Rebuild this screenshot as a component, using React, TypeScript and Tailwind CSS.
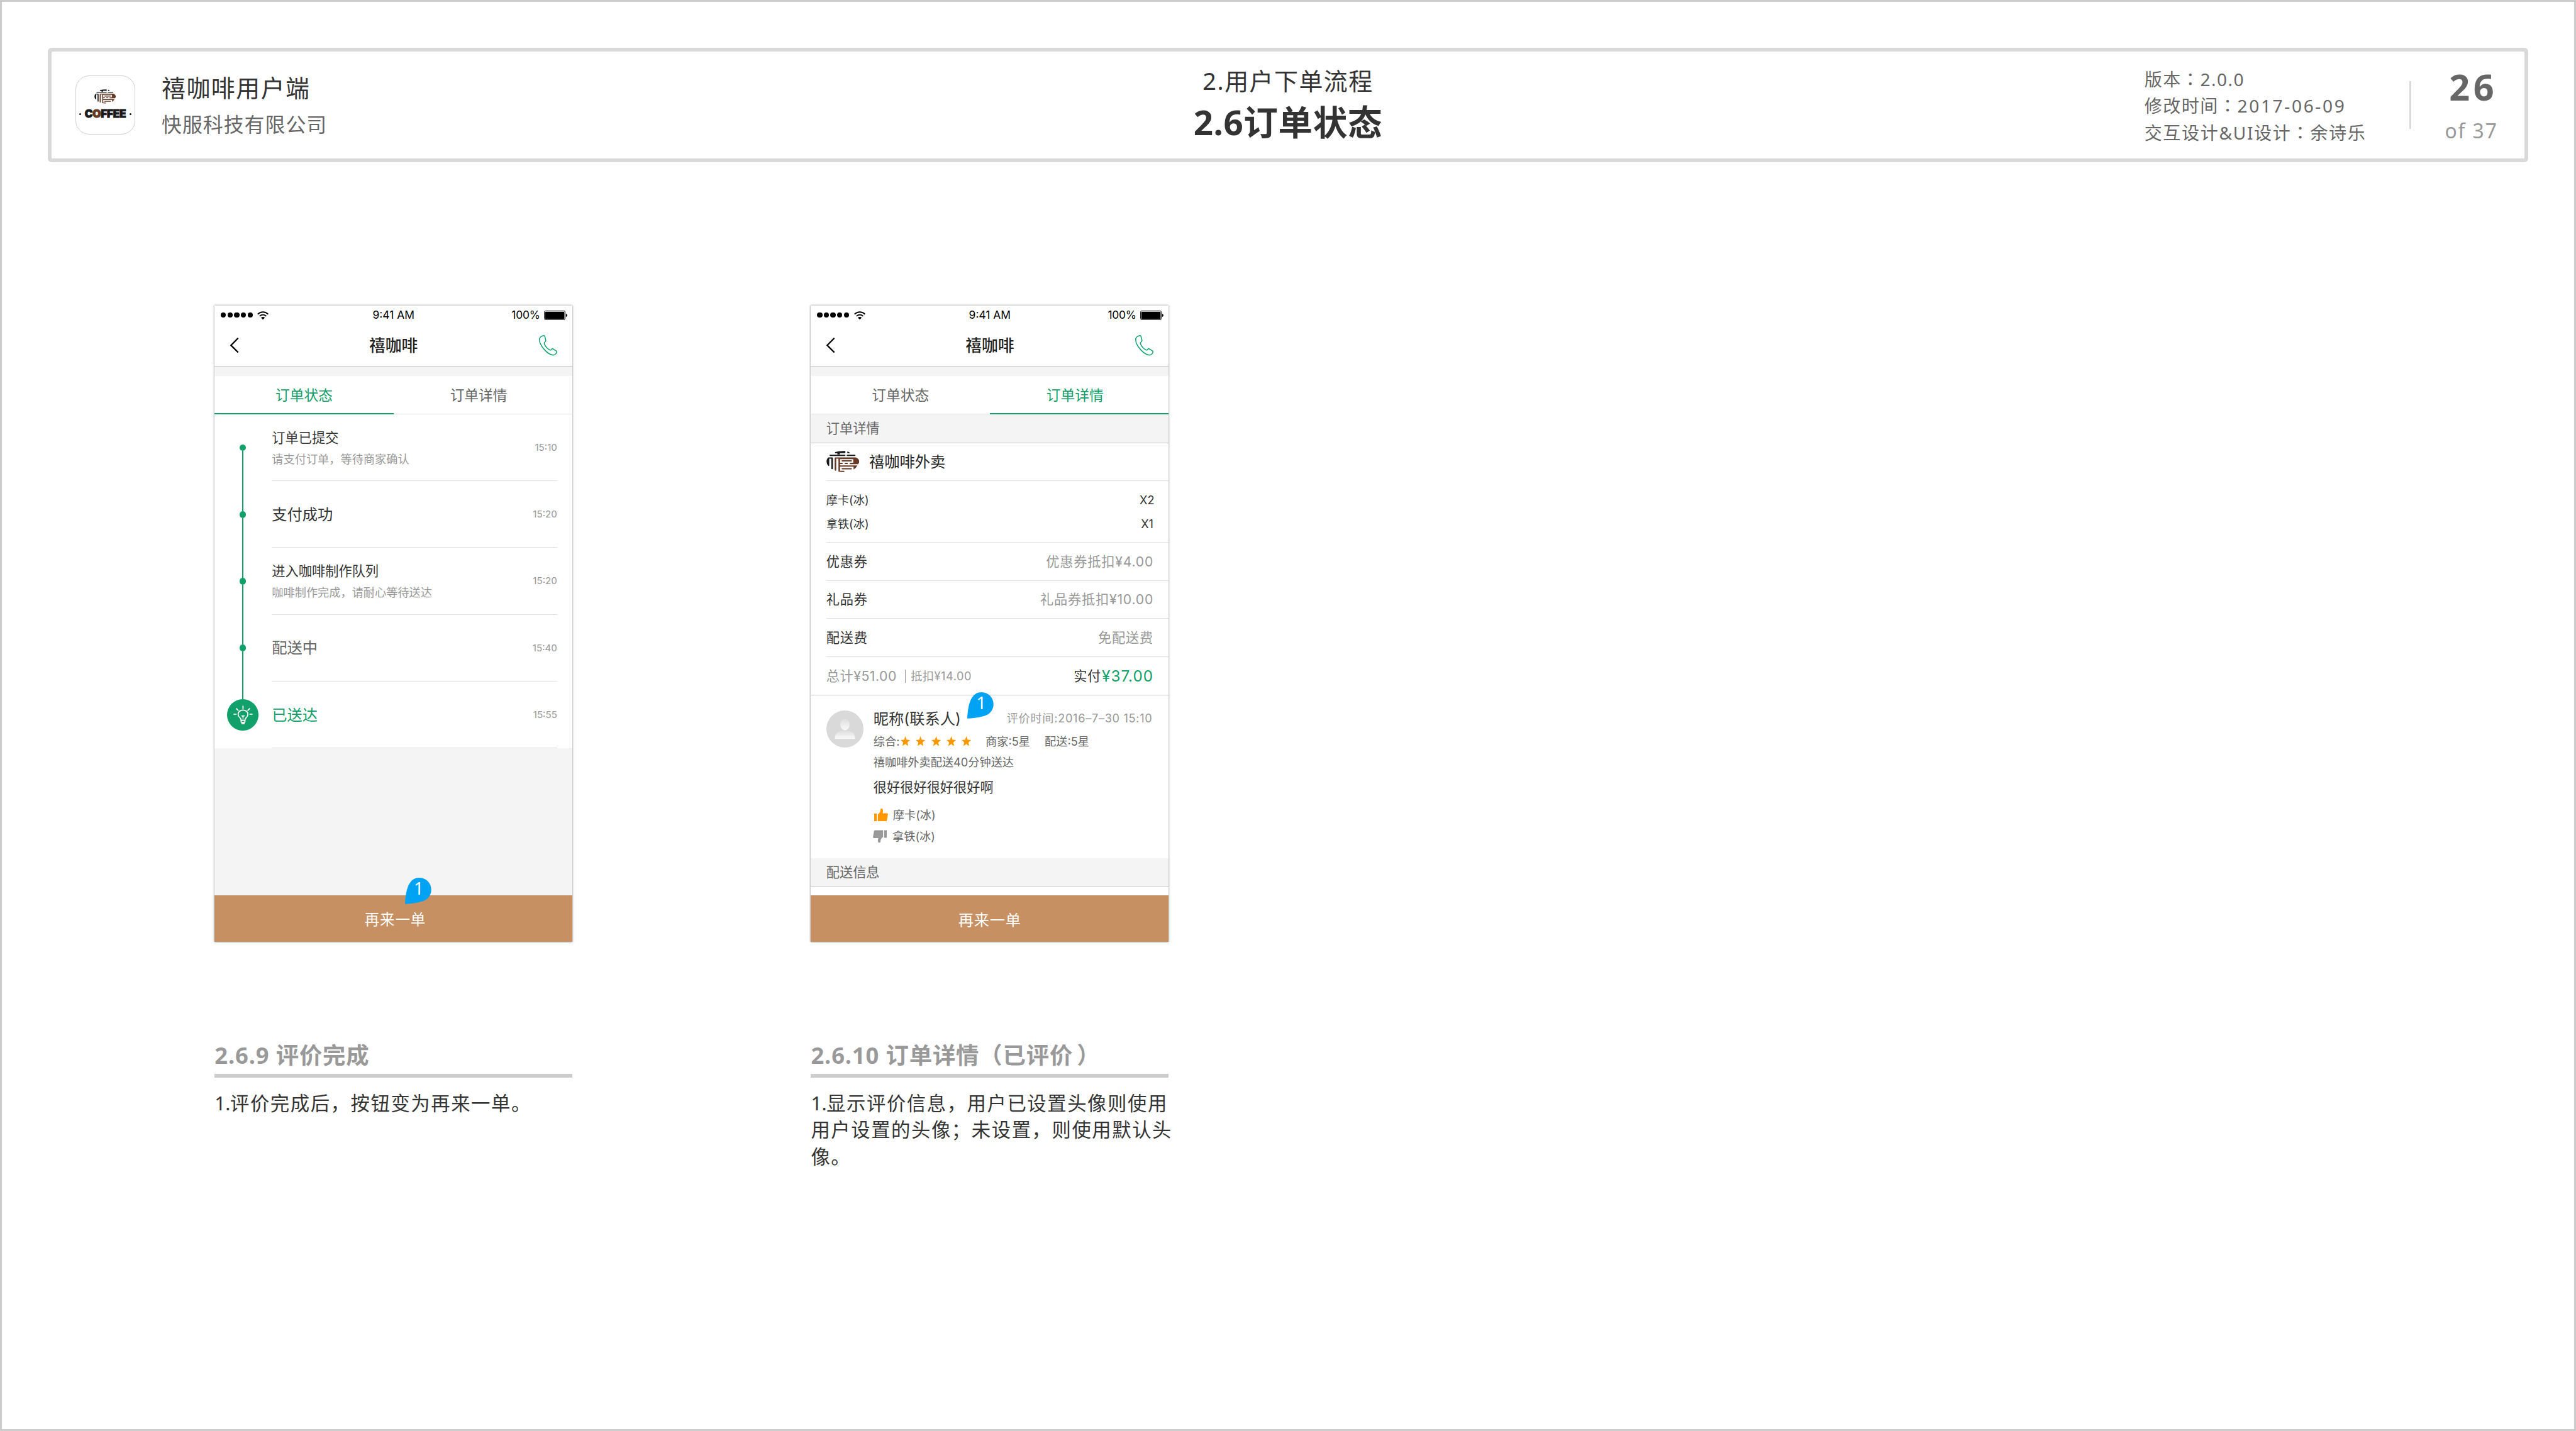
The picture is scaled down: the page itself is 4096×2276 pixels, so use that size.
import type { ReactNode } from "react";

function BrandMark({ className }: { className: string }) {
  return (
    <svg viewBox="21 33 207 136" preserveAspectRatio="none" className={className}>
      <g fill="#1a1a1a">
        <path d="M76 41Q100 33 138 34Q141 35 141 41Q141 48 138 48H106V56H90V49H78Q73 45 76 41Z" />
        <path d="M152 38Q160 37 170 46Q170 48 166 48H155Q151 48 152 38Z" />
        <rect x="41" y="58" width="100" height="8" rx="4" />
        <rect x="149" y="58" width="55" height="8" rx="4" />
        <path d="M34 75H58Q62 75 62 79V146Q62 150 57 150Q52 150 52 146V83H39V126Q39 130 34 130Q22 118 22 101Q22 85 34 75Z" />
      </g>
      <path
        fill="#663a24"
        d="M77 75H205Q226 82 228 101Q227 112 219 118H168V109H190V86H107V109H122Q126 113 122 117H107V126H216Q208 144 192 152V134H107V160H132Q138 163 132 167Q115 169 97 165V83H83V156Q83 160 78 160Q73 158 73 154V79Q73 75 77 75Z"
      />
      <g fill="#663a24">
        <rect x="117" y="93" width="64" height="8" rx="3" />
        <rect x="136" y="109" width="20" height="8" rx="3" />
        <rect x="117" y="143" width="64" height="8" rx="3" />
      </g>
    </svg>
  );
}

function AppIcon() {
  return (
    <div className="mt-[50px] flex h-[124px] w-[124px] shrink-0 flex-col items-center rounded-[29px] border-2 border-[#cfcfcf] bg-white">
      <BrandMark className="mt-[28px] h-[30px] w-[45px]" />
      <div className="mt-[10px] flex w-[110px] items-center justify-between">
        <span className="h-[4px] w-[4px] rounded-full bg-[#1a1a1a]" />
        <span className="font-['Inter',sans-serif] text-[22.5px] leading-[24px] font-black tracking-[-0.3px] text-[#1a1a1a] [-webkit-text-stroke:1.3px_currentColor]">
          C<span className="text-[#663a24]">O</span>FFEE
        </span>
        <span className="h-[4px] w-[4px] rounded-full bg-[#1a1a1a]" />
      </div>
    </div>
  );
}

function Colon() {
  return <span className="font-['Noto_Sans_CJK_TC',sans-serif] leading-[0]">：</span>;
}

function SheetHeader() {
  return (
    <header className="mx-[96px] mt-[96px] flex h-[240px] rounded-[8px] border-8 border-[#d9d9d9] bg-white">
      <div className="flex w-[797px] shrink-0 pl-[51px]">
        <AppIcon />
        <div className="ml-[56px] pt-[39px]">
          <div className="text-[50px] leading-[76px] tracking-[2px] whitespace-nowrap text-[#333]">禧咖啡用户端</div>
          <div className="text-[42px] leading-[76px] tracking-[1.4px] whitespace-nowrap text-[#666]">快服科技有限公司</div>
        </div>
      </div>
      <div className="flex-1 pt-[19px] text-center text-[#333]">
        <div className="text-[50px] leading-[87px] tracking-[2px]">2.用户下单流程</div>
        <div className="text-[72px] leading-[85px] font-bold tracking-[0.8px]">2.6订单状态</div>
      </div>
      <div className="flex w-[797px] shrink-0">
        <div className="w-[556px] pt-[30px] text-[37px] leading-[56px] tracking-[2px] whitespace-nowrap text-[#666]">
          <div className="h-[56px]">版本<Colon />2.0.0</div>
          <div className="h-[56px]">
            修改时间<Colon />
            <span className="tracking-[3.5px]">2017-06-09</span>
          </div>
          <div className="h-[56px] tracking-[2.2px]">交互设计&amp;UI设计<Colon />余诗乐</div>
        </div>
        <div className="mt-[62px] h-[100px] w-[4px] bg-[#d9d9d9]" />
        <div className="flex-1 pt-[29px] pl-[22px] text-center">
          <div className="text-[76px] leading-[90px] font-bold tracking-[7px] text-[#666]">26</div>
          <div className="pr-[8px] text-[42px] leading-[95px] tracking-[2.5px] text-[#999]">of 37</div>
        </div>
      </div>
    </header>
  );
}

function StatusBar() {
  return (
    <div className="flex h-[40px] shrink-0 items-center font-['Inter',sans-serif] text-[23px] text-black">
      <div className="flex w-[275px] items-center pl-[13px]">
        <div className="flex gap-[3px]">
          {[0, 1, 2, 3, 4].map((i) => (
            <span key={i} className="h-[11px] w-[11px] rounded-full bg-black" />
          ))}
        </div>
        <svg viewBox="0 0 24 18" className="ml-[10px] h-[18px] w-[24px]">
          <g fill="none" stroke="#000" strokeWidth="2.5">
            <path d="M1 6.3C7.5 0 16.5 0 23 6.3" />
            <path d="M5 10.4C9.2 6.6 14.8 6.6 19 10.4" />
          </g>
          <path d="M8 13.4C10.4 11.4 13.6 11.4 16 13.4L12 17.8Z" />
        </svg>
      </div>
      <div className="flex-1 text-center whitespace-nowrap">9:41 AM</div>
      <div className="flex w-[275px] items-center justify-end pr-[11px]">
        <span className="tracking-[-0.3px]">100%</span>
        <svg viewBox="0 0 49 20" className="ml-[8px] h-[20px] w-[49px]">
          <rect x=".6" y=".6" width="43.8" height="18.8" rx="3" fill="none" stroke="#000" strokeWidth="1.2" />
          <rect x="2.2" y="2.2" width="40.6" height="15.6" rx="1.6" />
          <path d="M46 6.5Q48.8 7.5 48.8 10Q48.8 12.5 46 13.5Z" />
        </svg>
      </div>
    </div>
  );
}

function NavBar() {
  return (
    <div className="flex h-[88px] shrink-0 items-center justify-between border-b border-[#c8c8c8] pr-[31px] pl-[31px]">
      <svg viewBox="0 0 39 32" className="h-[32px] w-[39px]" fill="none" stroke="#000" strokeWidth="3">
        <path d="M18 1L3 16L18 31" />
      </svg>
      <div className="pt-[3px] text-[34px] font-medium text-[#222]">禧咖啡</div>
      <svg viewBox="0 0 39 43" className="h-[43px] w-[39px]" fill="none" stroke="#11a56c" strokeWidth="2">
        <path d="M8.5 1.3C10.5.8 12 1.5 12.3 3L14.3 11C14.8 13.2 11 14.5 11 17C11.4 22 20 31.2 24.3 31.4C26 31.2 26.8 28 28.6 28.4L36.2 33.2C39 35.6 35 41.6 30 41.8C19 41.4 1 23 1 9C1 5 5 2 8.5 1.3Z" />
      </svg>
    </div>
  );
}

function Tabs({ active }: { active: 0 | 1 }) {
  const on = "h-[80px] border-b-[3px] border-[#11a069] text-[#11a069]";
  const off = "h-[80px] border-b border-[#e0e0e0] text-[#666]";
  return (
    <div className="grid h-[100px] shrink-0 grid-cols-2 grid-rows-[80px] border-t-[20px] border-[#f4f4f4] text-center text-[30px] leading-[83px]">
      <div className={active === 0 ? on : off}>订单状态</div>
      <div className={active === 1 ? on : off}>
        <div className="pr-[18px]">订单详情</div>
      </div>
    </div>
  );
}

function Phone({ active, children }: { active: 0 | 1; children: ReactNode }) {
  return (
    <div className="relative flex h-[1334px] w-[750px] flex-col bg-white font-['Inter','Noto_Sans_CJK_SC',sans-serif] shadow-[0_0_4px_rgba(0,0,0,0.5)]">
      <StatusBar />
      <NavBar />
      <Tabs active={active} />
      {children}
    </div>
  );
}

function Marker({ className }: { className: string }) {
  return (
    <div className={className}>
      <svg viewBox="0 0 55 55" className="absolute inset-0 h-full w-full">
        <path fill="#00a2f4" d="M0 55C1 36 4 20 9.7 12C14.5 4 21 0 30 0C44 0 55 11 55 25C55 34 51 41 44 46C36 51 20 54 0 55Z" />
      </svg>
      <span className="relative block pl-[3px] text-center font-['Noto_Sans',sans-serif] text-[36px] leading-[46px] text-white">1</span>
    </div>
  );
}

function BulbBadge() {
  return (
    <svg viewBox="0 0 66 66" className="h-[66px] w-[66px]">
      <circle cx="33" cy="33" r="33" fill="#11a069" />
      <g fill="none" stroke="#fff" strokeWidth="2.4">
        <path d="M33.5 14V20.5M13.5 31.5H20M47 31.5H53.5M19 19.3L24 24.3M48 19.3L43 24.3" />
        <path d="M29.5 44.5C29.5 41.5 28.6 40.6 27 39C24.3 36.6 23.2 34.4 23.2 31.5C23.2 26.6 27.8 22.8 33.5 22.8C39.2 22.8 43.8 26.6 43.8 31.5C43.8 34.4 42.7 36.6 40 39C38.4 40.6 37.5 41.5 37.5 44.5Z" />
        <path d="M29.6 44.5V47.5Q29.6 49 31.5 49H35.5Q37.4 49 37.4 47.5V44.5" />
        <path d="M31.5 49V51.5H35.5V49" />
      </g>
      <path d="M31 34.8H36L33.5 38.4ZM33.5 38V43" fill="none" stroke="#fff" strokeWidth="1.6" />
    </svg>
  );
}

interface Step {
  title: string;
  note?: string;
  time: string;
  tone: string;
}

const steps: Step[] = [
  { title: "订单已提交", note: "请支付订单，等待商家确认", time: "15:10", tone: "text-[#333]" },
  { title: "支付成功", time: "15:20", tone: "text-[#333]" },
  { title: "进入咖啡制作队列", note: "咖啡制作完成，请耐心等待送达", time: "15:20", tone: "text-[#333]" },
  { title: "配送中", time: "15:40", tone: "text-[#666]" },
  { title: "已送达", time: "15:55", tone: "text-[#11a069]" },
];

function StepRail({ index }: { index: number }) {
  const last = index === steps.length - 1;
  return (
    <div className="flex w-[118px] flex-col items-center">
      <div className={index === 0 ? "w-[2px] flex-1" : "w-[2px] flex-1 bg-[#11a069]"} />
      {last ? <BulbBadge /> : <div className="h-[14px] w-[14px] rounded-full bg-[#11a069]" />}
      <div className={last ? "w-[2px] flex-1" : "w-[2px] flex-1 bg-[#11a069]"} />
    </div>
  );
}

function Timeline() {
  return (
    <>
      {steps.map((s, i) => (
        <div key={i} className="flex h-[140px] shrink-0 pr-[32px]">
          <StepRail index={i} />
          <div className="ml-[2px] flex flex-1 items-center justify-between border-b border-[#e0e0e0]">
            {s.note ? (
              <div className="pt-[3px]">
                <div className="text-[28px] leading-[46px] text-[#333]">{s.title}</div>
                <div className="text-[24px] leading-[44px] text-[#999]">{s.note}</div>
              </div>
            ) : (
              <div className={s.tone}>
                <div className="pt-[3px] text-[32px] leading-[50px]">{s.title}</div>
              </div>
            )}
            <span className="pt-[2px] text-[20px] text-[#999]">{s.time}</span>
          </div>
        </div>
      ))}
    </>
  );
}

function SectionTitle({ children }: { children: ReactNode }) {
  return (
    <div className="h-[60px] shrink-0 border-b border-[#c8c8c8] bg-[#f4f4f4] pl-[32px] text-[28px] leading-[60px] text-[#666]">
      {children}
    </div>
  );
}

function Star() {
  return (
    <svg viewBox="0 0 20 21" className="h-[21px] w-[20px]">
      <path fill="#ff9800" d="M10 0L12.6 7.2L20 8L14.4 13L16.2 20.6L10 16.6L3.8 20.6L5.6 13L0 8L7.4 7.2Z" />
    </svg>
  );
}

function Thumb({ className, color }: { className: string; color: string }) {
  return (
    <svg viewBox="0 0 29 27" className={className}>
      <path fill={color} d="M0 10.5H5.6V27H0ZM7.8 27V12C11 10 13 7 13.2 2.5C13.4.3 14 0 15.6 0C18 0 18.6 2.5 18.6 5C18.6 7 18 8.8 17.6 10H27.5Q29 10.2 28.8 12.5L26.8 24Q26.2 27 24 27Z" />
    </svg>
  );
}

function OrderDetail() {
  return (
    <>
      <SectionTitle>订单详情</SectionTitle>
      <div className="ml-[32px] flex h-[80px] shrink-0 items-center border-b border-[#e0e0e0]">
        <BrandMark className="h-[45px] w-[69px]" />
        <span className="ml-[21px] text-[32px] text-[#222]">禧咖啡外卖</span>
      </div>
      <div className="ml-[32px] h-[129px] shrink-0 border-b border-[#e0e0e0] pt-[16px] pr-[30px] text-[24px] leading-[50px] text-[#333]">
        <div className="flex justify-between">
          <span>摩卡(冰)</span>
          <span>X2</span>
        </div>
        <div className="flex justify-between">
          <span>拿铁(冰)</span>
          <span className="pr-[2px]">X1</span>
        </div>
      </div>
      {[
        ["优惠券", "优惠券抵扣¥4.00"],
        ["礼品券", "礼品券抵扣¥10.00"],
        ["配送费", "免配送费"],
      ].map(([name, value]) => (
        <div key={name} className="ml-[32px] flex h-[80px] shrink-0 items-center justify-between border-b border-[#e0e0e0] pt-[2px] pr-[32px] text-[28px] tracking-[1px]">
          <span className="text-[#333]">{name}</span>
          <span className="text-[#999]">{value}</span>
        </div>
      ))}
      <div className="flex h-[80px] shrink-0 items-center border-b border-[#c8c8c8] pt-[2px] pr-[32px] pl-[32px] text-[#999]">
        <span className="text-[28px] tracking-[0.7px]">总计¥51.00</span>
        <span className="ml-[17px] h-[28px] border-l border-[#999]" />
        <span className="ml-[11px] text-[24px] tracking-[0.7px]">抵扣¥14.00</span>
        <span className="ml-auto text-[28px] tracking-[0.6px] text-[#333]">实付</span>
        <span className="ml-[2px] text-[32px] tracking-[1.3px] text-[#11a069]">¥37.00</span>
      </div>
      <div className="flex flex-1 pr-[34px] pl-[32px]">
        <div className="mt-[32px] h-[78px] w-[78px] shrink-0 overflow-hidden rounded-full bg-[#d9d9d9]">
          <svg viewBox="0 0 78 78" className="h-[78px] w-[78px]">
            <defs>
              <linearGradient id="person" x1="0" y1="0" x2="0" y2="1">
                <stop offset="0" stopColor="#dedede" />
                <stop offset="1" stopColor="#fafafa" />
              </linearGradient>
            </defs>
            <ellipse cx="39" cy="29.5" rx="9.8" ry="12" fill="url(#person)" />
            <path d="M18 59.5V57C18 48 25 42.5 39 42.5C53 42.5 60 48 60 57V59.5Z" fill="url(#person)" />
          </svg>
        </div>
        <div className="ml-[21px] flex-1 text-[24px] text-[#666]">
          <div className="mt-[24px] flex h-[50px] items-center justify-between">
            <span className="text-[32px] text-[#333]">昵称(联系人)</span>
            <span className="tracking-[0.9px] whitespace-nowrap text-[#999]">评价时间:2016–7–30 15:10</span>
          </div>
          <div className="flex h-[46px] items-center">
            <span className="w-[57px]">综合:</span>
            <div className="flex w-[178px] gap-[12px]">
              <Star />
              <Star />
              <Star />
              <Star />
              <Star />
            </div>
            <span className="w-[124px]">商家:5星</span>
            <span>配送:5星</span>
          </div>
          <div className="h-[40px] leading-[40px]">禧咖啡外卖配送40分钟送达</div>
          <div className="mt-[11px] h-[46px] text-[28px] leading-[46px] text-[#333]">很好很好很好很好啊</div>
          <div className="mt-[12px] flex h-[44px] items-center">
            <Thumb className="ml-px h-[27px] w-[29px]" color="#ff9800" />
            <span className="ml-[11px] pt-[2px]">摩卡(冰)</span>
          </div>
          <div className="flex h-[46px] items-center">
            <Thumb className="-ml-px h-[27px] w-[29px] rotate-180" color="#999" />
            <span className="ml-[12px]">拿铁(冰)</span>
          </div>
        </div>
      </div>
      <SectionTitle>配送信息</SectionTitle>
      <div className="h-[17px] shrink-0" />
    </>
  );
}

function Caption({ title, children }: { title: ReactNode; children: ReactNode }) {
  return (
    <div className="mt-[203px] w-[750px]">
      <h2 className="border-b-8 border-[#ccc] pb-[4px] text-[48px] leading-[70px] font-bold tracking-[1.1px] whitespace-nowrap text-[#999]">{title}</h2>
      <div className="mt-[26px] text-[40px] leading-[56px] tracking-[2.1px] whitespace-nowrap text-[#333]">{children}</div>
    </div>
  );
}

export default function App() {
  return (
    <div className="h-[2276px] w-[4096px] overflow-hidden bg-white">
      <div className="h-[3000.5px] w-[5400px] border-4 border-[#ccc] bg-white font-['Noto_Sans','Noto_Sans_CJK_SC',sans-serif] [zoom:0.758519]">
        <SheetHeader />
        <main className="mt-[301px] ml-[446px] flex gap-[500px]">
          <section>
            <Phone active={0}>
              <Timeline />
              <div className="flex-1 bg-[#f4f4f4]" />
              <div className="h-[98px] shrink-0 bg-[#c69063] pl-[7px] text-center text-[31px] leading-[103px] tracking-[1px] text-white">再来一单</div>
              <Marker className="absolute top-[1200px] left-[399px] h-[55px] w-[55px]" />
            </Phone>
            <Caption title="2.6.9 评价完成">
              <span className="tracking-[-0.5px]">1.</span>评价完成后，按钮变为再来一单。
            </Caption>
          </section>
          <section>
            <Phone active={1}>
              <OrderDetail />
              <div className="h-[98px] shrink-0 bg-[#c69063] text-center text-[32px] leading-[103px] tracking-[1px] text-white">再来一单</div>
              <Marker className="absolute top-[811px] left-[328px] h-[55px] w-[55px]" />
            </Phone>
            <Caption
              title={
                <>
                  2.6.10 订单详情（已评价<span className="ml-[8px]">）</span>
                </>
              }
            >
              <span className="tracking-[-0.5px]">1.</span>显示评价信息，用户已设置头像则使用
              <br />
              用户设置的头像；未设置，则使用默认头
              <br />
              像。
            </Caption>
          </section>
        </main>
      </div>
    </div>
  );
}
